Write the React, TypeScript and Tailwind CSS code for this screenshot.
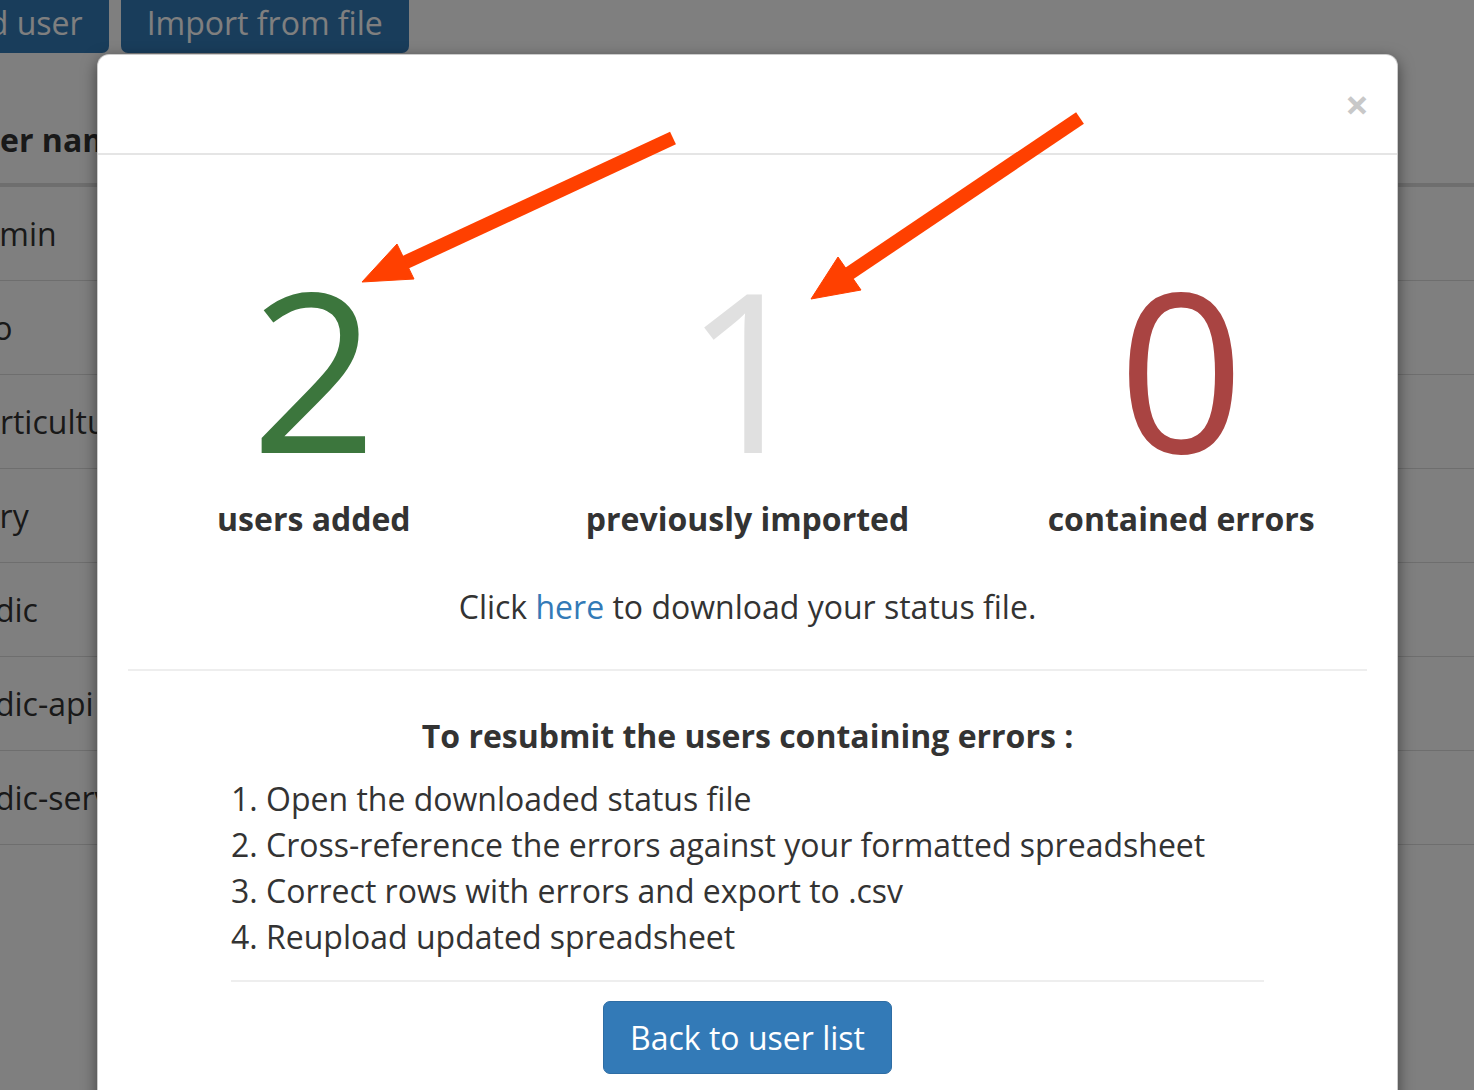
const rows = [
  { text: "admin", cls: "ml-[-38px]" },
  { text: "demo", cls: "ml-[-74px]" },
  { text: "horticulture", cls: "ml-[-39px]" },
  { text: "library", cls: "ml-[-67px]" },
  { text: "nordic", cls: "ml-[-57px]" },
  { text: "nordic-api", cls: "ml-[-57px]" },
  { text: "nordic-service", cls: "ml-[-57px]" },
];

const stats = [
  { value: "2", label: "users added", color: "text-[#3c763d]" },
  { value: "1", label: "previously imported", color: "text-[#e0e0e0]" },
  { value: "0", label: "contained errors", color: "text-[#a94442]" },
];

const steps = [
  "Open the downloaded status file",
  "Cross-reference the errors against your formatted spreadsheet",
  "Correct rows with errors and export to .csv",
  "Reupload updated spreadsheet",
];

function Arrows() {
  return (
    <svg
      className="pointer-events-none absolute inset-0"
      width={1474}
      height={1090}
      viewBox="0 0 1474 1090"
    >
      <g fill="#ff4000" stroke="#ff4000">
        <line x1={673} y1={138} x2={404} y2={263} strokeWidth={14} />
        <polygon points="362,282 397,244 414,279" strokeWidth={1} />
        <line x1={1080} y1={118} x2={847} y2={275} strokeWidth={14} />
        <polygon points="811,299 838,257 861,290" strokeWidth={1} />
      </g>
    </svg>
  );
}

export default function App() {
  return (
    <div className="relative h-[1090px] w-[1474px] overflow-hidden bg-white font-['Open_Sans',sans-serif] text-[32px] leading-[46px] text-[#333]">
      {/* page behind the dialog */}
      <div className="mt-[-30px] flex gap-[12px]">
        <button className="ml-[-77px] h-[83px] rounded-[7px] bg-[#337ab7] px-[26px] pt-[22px] text-left leading-[46px] text-white">
          Add user
        </button>
        <button className="h-[83px] rounded-[7px] bg-[#337ab7] px-[26px] pt-[22px] text-left leading-[46px] text-white">
          Import from file
        </button>
      </div>
      <div className="border-b-4 border-[#dddddd] pt-[64px] pb-[20px]">
        <div className="ml-[-40px] font-bold">User name</div>
      </div>
      {rows.map((r) => (
        <div key={r.text} className="flex h-[94px] items-center border-b border-[#dddddd]">
          <div className={r.cls}>{r.text}</div>
        </div>
      ))}

      {/* backdrop + dialog */}
      <div className="absolute inset-0 overflow-hidden bg-black/50">
        <div className="ml-[97px] mt-[54px] w-[1301px] rounded-[12px] border border-black/20 bg-white shadow-[0_5px_15px_rgba(0,0,0,0.5)]">
          <div className="flex h-[100px] items-center justify-end border-b-2 border-[#e5e5e5] pr-[28px]">
            <span className="text-[42px] font-bold leading-none text-[#c8c8c8]">×</span>
          </div>
          <div className="px-[30px] pb-[40px] pt-[102px]">
            <div className="mx-[-31px] grid grid-cols-3 text-center">
              {stats.map((s) => (
                <div key={s.label}>
                  <div className={`text-[221px] leading-none ${s.color}`}>{s.value}</div>
                  <div className="mt-[18px] font-bold">{s.label}</div>
                </div>
              ))}
            </div>
            <p className="mt-[42px] text-center">
              Click <span className="text-[#337ab7]">here</span> to download your status file.
            </p>
            <div className="mt-[39px] h-[2px] bg-[#eeeeee]" />
            <h4 className="mt-[42px] text-center font-bold">To resubmit the users containing errors :</h4>
            <div className="mx-[103px]">
              <ol className="mt-[17px] list-inside list-decimal">
                {steps.map((s) => (
                  <li key={s}>{s}</li>
                ))}
              </ol>
              <div className="mt-[20px] h-[2px] bg-[#eeeeee]" />
            </div>
            <div className="mt-[19px] flex justify-center">
              <button className="h-[73px] w-[289px] rounded-[7px] border border-[#2e6da4] bg-[#337ab7] text-white">
                Back to user list
              </button>
            </div>
          </div>
        </div>
      </div>

      <Arrows />
    </div>
  );
}
